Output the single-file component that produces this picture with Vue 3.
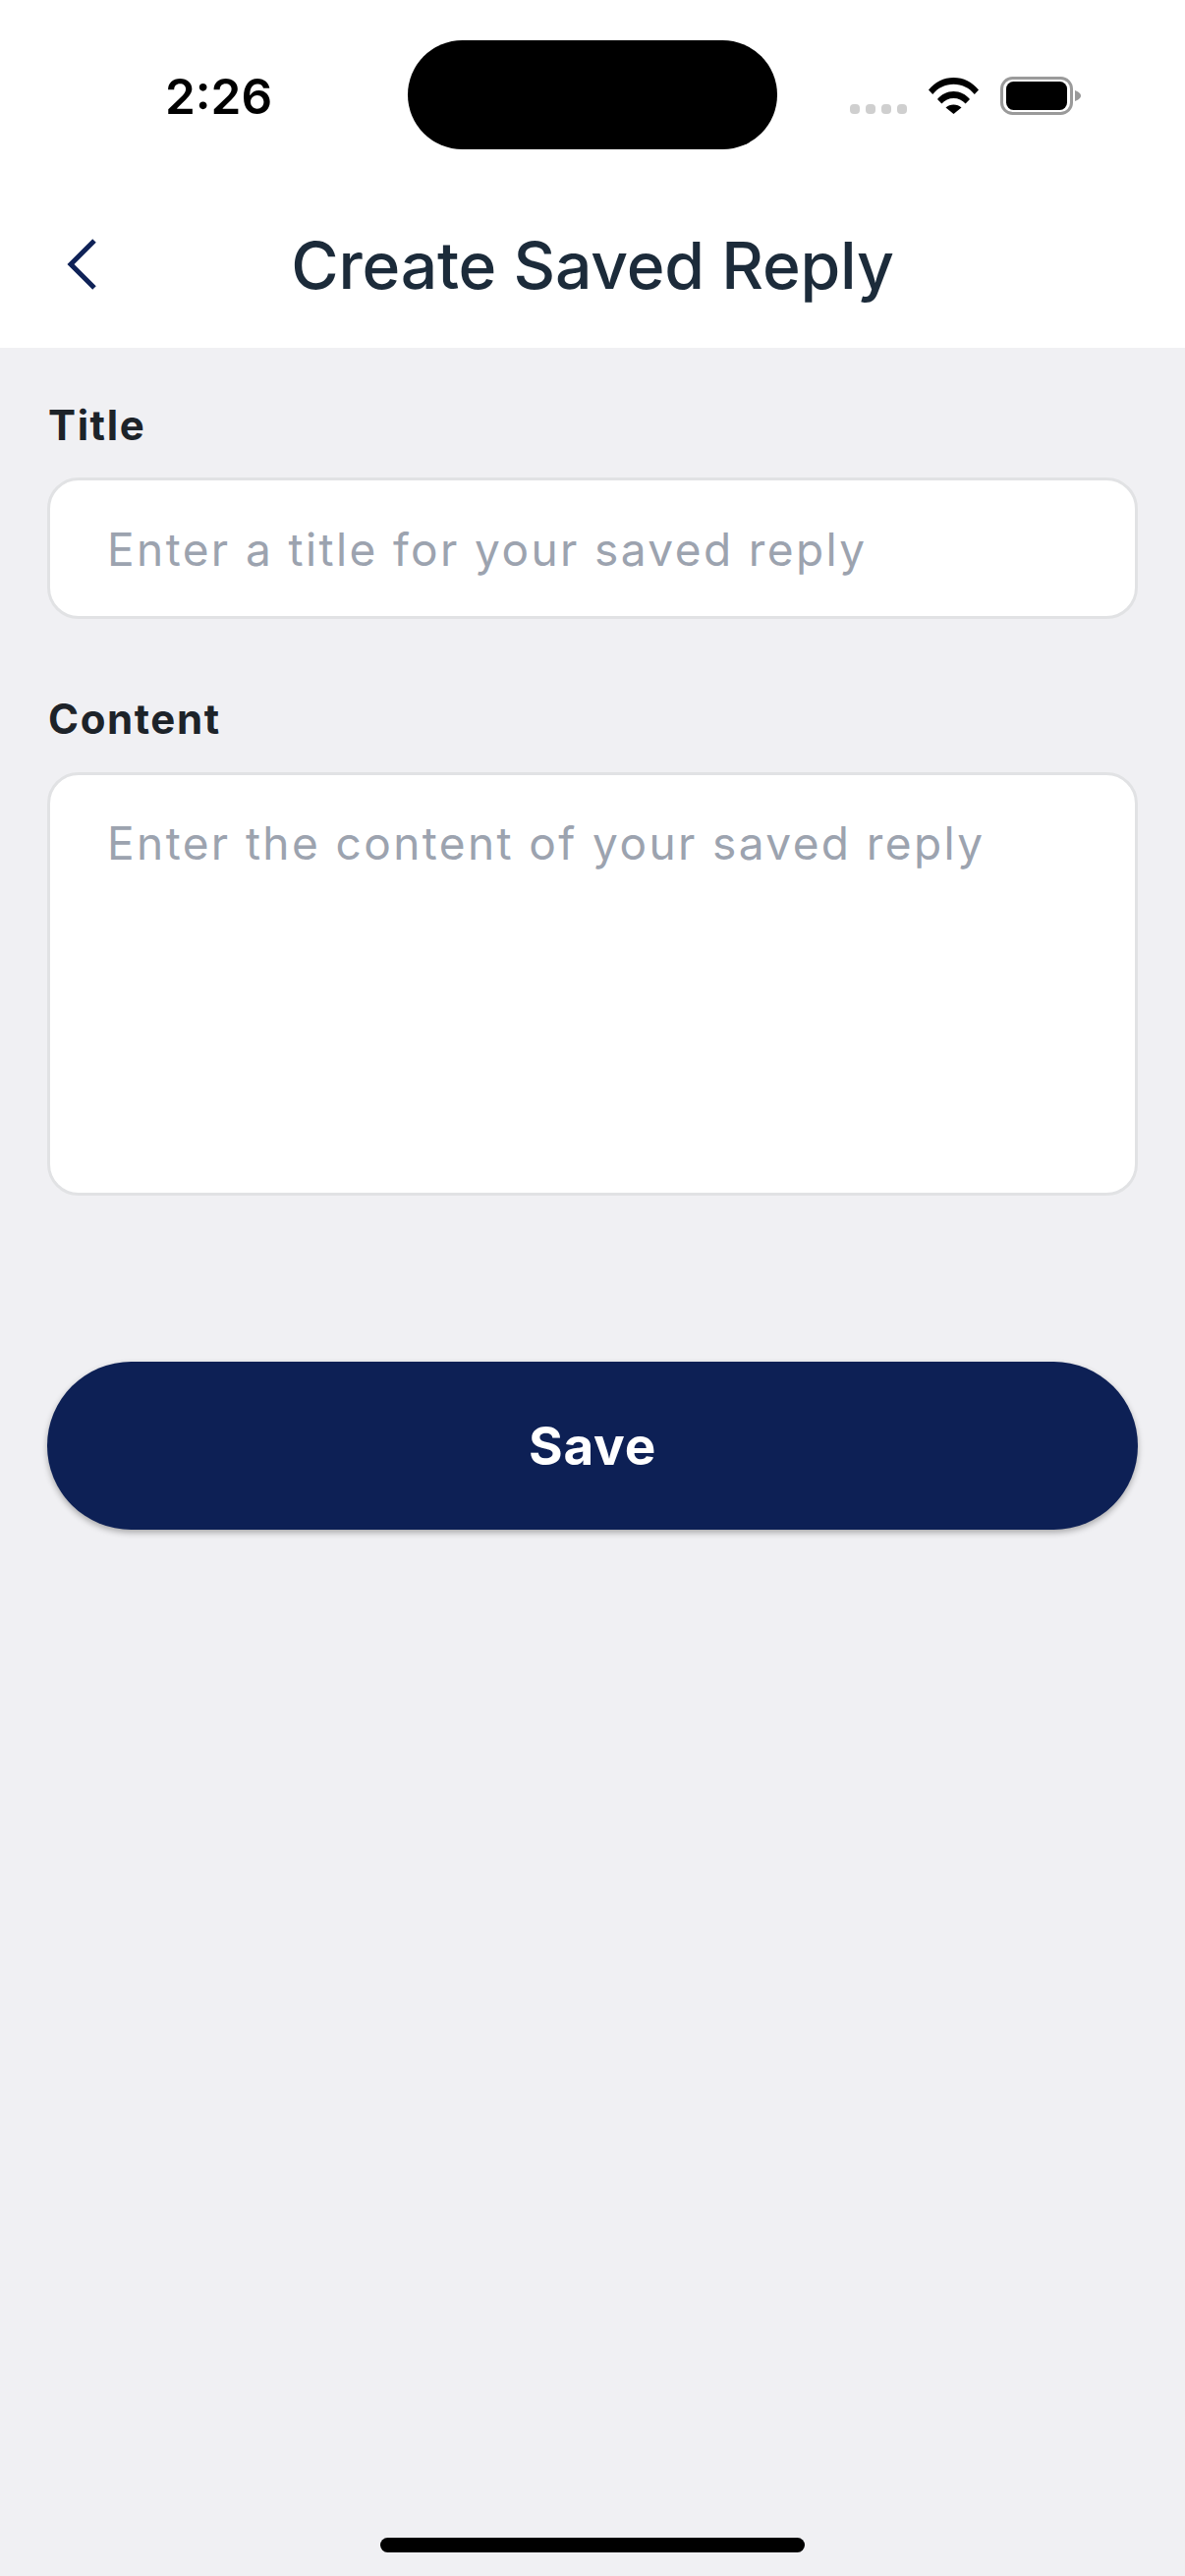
<template>
  <div class="screen">
    <header class="top">
      <div class="status">
        <span class="time">2:26</span>
        <div class="island"></div>
        <div class="status-icons">
          <div class="dots"><i></i><i></i><i></i><i></i></div>
          <svg class="wifi" width="51" height="37" viewBox="0 0 51 37">
            <path d="M0 12.5C6.5 4.6 15.4 0 25.5 0S44.500 4.600 51 12.500L46.800 17C41.400 10.500 34 6.800 25.500 6.800S9.600 10.500 4.200 17Z" />
            <path d="M9 22C13 17 19 14 25.500 14S38 17 42 22L37.600 26.600C34.500 23 30.300 21 25.500 21S16.500 23 13.400 26.600Z" />
            <path d="M17.500 30.500C19.600 28.500 22.400 27.500 25.500 27.500S31.400 28.500 33.500 30.500L25.500 37Z" />
          </svg>
          <svg class="battery" width="82" height="39" viewBox="0 0 82 39">
            <rect x="1.500" y="1.500" width="71" height="36" rx="11" fill="none" stroke="#9a9a9a" stroke-width="3" />
            <rect x="6" y="5" width="62" height="29" rx="7.500" fill="#000" />
            <path d="M76 14C79 15 82 17 82 19.500S79 24 76 25Z" fill="#9a9a9a" />
          </svg>
        </div>
      </div>
      <div class="nav">
        <svg class="back" width="30" height="52" viewBox="0 0 30 52">
          <path d="M28 2L4 26L28 50" fill="none" stroke="#0f2257" stroke-width="5" />
        </svg>
        <h1>Create Saved Reply</h1>
      </div>
    </header>

    <main class="form">
      <label>Title</label>
      <div class="field single">{{ titleHint }}</div>
      <label class="second">Content</label>
      <div class="field multi">{{ contentHint }}</div>
      <button class="save">Save</button>
    </main>

    <div class="home-bar"></div>
  </div>
</template>

<script setup>
const titleHint = 'Enter a title for your saved reply'
const contentHint = 'Enter the content of your saved reply'
</script>

<style scoped>
.screen {
  width: 1206px;
  height: 2622px;
  display: flex;
  flex-direction: column;
  background: #f0f0f3;
  font-family: Inter, "Liberation Sans", sans-serif;
  overflow: hidden;
}

.top {
  height: 354px;
  background: #fff;
  flex-shrink: 0;
}

.status {
  height: 193px;
  padding-top: 41px;
  box-sizing: border-box;
  display: flex;
  align-items: flex-start;
}

.time {
  width: 415px;
  padding: 27px 0 0 168px;
  box-sizing: border-box;
  font-size: 49.500px;
  line-height: 60px;
  font-weight: 600;
  color: #000;
}

.island {
  width: 376px;
  height: 111px;
  border-radius: 56px;
  background: #000;
}

.status-icons {
  margin-left: 74px;
  margin-top: 37px;
  display: flex;
  align-items: flex-end;
}

.dots {
  display: flex;
  gap: 6px;
  margin-bottom: 1px;
}

.dots i {
  width: 10px;
  height: 10px;
  border-radius: 4px;
  background: #cfcfcf;
}

.wifi {
  margin-left: 22px;
  fill: #000;
  margin-bottom: 1px;
}

.battery {
  margin-left: 22px;
}

.nav {
  display: flex;
  align-items: center;
  justify-content: center;
  position: relative;
  height: 154px;
}

.back {
  position: absolute;
  left: 68px;
  top: 50px;
}

h1 {
  margin: 0;
  font-size: 66px;
  line-height: 80px;
  font-weight: 550;
  letter-spacing: -0.200px;
  color: #1c2b3a;
}

.form {
  flex: 1;
  padding: 54px 48px 0;
  display: flex;
  flex-direction: column;
}

label {
  padding-left: 1px;
  font-size: 42px;
  line-height: 50px;
  font-weight: 650;
  letter-spacing: 1.600px;
  color: #1d2329;
}

.second {
  margin-top: 77px;
}

.field {
  margin-top: 28px;
  box-sizing: border-box;
  background: #fff;
  border: 3px solid #e1e2e4;
  border-radius: 32px;
  padding: 0 58px;
  font-size: 46px;
  letter-spacing: 2.400px;
  color: #9ca3af;
}

.second + .field {
  margin-top: 29px;
}

.single {
  height: 144px;
  line-height: 141px;
}

.multi {
  height: 431px;
  line-height: 139px;
}

.save {
  margin-top: 169px;
  height: 171px;
  border: none;
  border-radius: 86px;
  background: #0d2055;
  color: #fff;
  font-family: inherit;
  font-size: 53px;
  font-weight: 650;
  letter-spacing: 0.800px;
  box-shadow: 0 3px 6px rgba(0, 0, 0, 0.3);
}

.home-bar {
  position: absolute;
  left: 387px;
  top: 2583px;
  width: 432px;
  height: 15px;
  border-radius: 8px;
  background: #000;
}
</style>

<style>
body {
  background: #f0f0f3;
}
</style>
